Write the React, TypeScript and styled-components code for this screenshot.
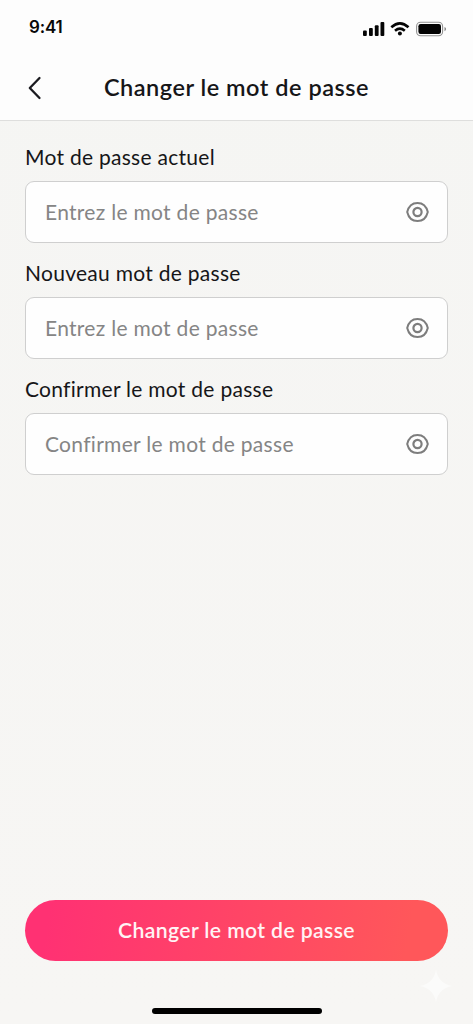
import React, { useState } from "react";
import styled, { createGlobalStyle } from "styled-components";

const GlobalStyle = createGlobalStyle`
  *, *::before, *::after { box-sizing: border-box; }
  body {
    margin: 0;
    background: #f6f6f4;
    font-family: Lato, "Liberation Sans", sans-serif;
    color: #161618;
  }
`;

const Screen = styled.div`
  position: relative;
  display: flex;
  flex-direction: column;
  width: 100%;
  height: 1024px;
  overflow: hidden;
  background: linear-gradient(#f5f5f3, #f7f6f4);
`;

const Header = styled.header`
  height: 121px;
  background: #fdfdfd;
  border-bottom: 1px solid #dededd;
`;

const StatusBar = styled.div`
  display: flex;
  justify-content: space-between;
  align-items: center;
  height: 56px;
  padding: 0 26px 0 29px;
`;

const Time = styled.span`
  font: 600 17px/20px Inter, sans-serif;
  letter-spacing: -0.2px;
  color: #080808;
  margin-top: -3px;
`;

const StatusIcons = styled.div`
  display: flex;
  align-items: center;
  margin-top: 2px;
`;

const NavBar = styled.div`
  display: grid;
  grid-template-columns: 70px 1fr 70px;
  align-items: center;
  height: 64px;
`;

const BackButton = styled.button`
  display: flex;
  padding: 0 0 0 27px;
  border: 0;
  background: none;
`;

const Title = styled.h1`
  margin: 0;
  padding-bottom: 2px;
  text-align: center;
  white-space: nowrap;
  font-size: 23.5px;
  line-height: 28px;
  font-weight: 600;
  letter-spacing: 0.52px;
`;

const Form = styled.form`
  flex: 1;
  display: flex;
  flex-direction: column;
  padding: 22px 25px 63px;
`;

const Field = styled.div`
  margin-bottom: 16px;
`;

const Label = styled.label`
  display: block;
  height: 38px;
  font-size: 21px;
  line-height: 28px;
  letter-spacing: 0.28px;
`;

const InputBox = styled.div`
  display: flex;
  align-items: center;
  height: 62px;
  padding: 0 18px 0 19px;
  border: 1px solid #cfcfcf;
  border-radius: 9px;
  background: #fefefe;
`;

const Input = styled.input`
  flex: 1;
  min-width: 0;
  padding: 0 0 1px;
  border: 0;
  outline: 0;
  background: none;
  font-family: inherit;
  font-size: 21px;
  line-height: 28px;
  letter-spacing: 0.3px;
  &::placeholder { color: #858585; opacity: 1; }
`;

const EyeButton = styled.button`
  display: flex;
  padding: 0;
  border: 0;
  background: none;
`;

const SubmitButton = styled.button`
  margin-top: auto;
  height: 61px;
  padding: 0 0 2px;
  border: 0;
  border-radius: 31px;
  background: linear-gradient(100deg, #ff3173 6%, #ff575a 90%);
  color: #fff3f5;
  font-family: inherit;
  font-size: 21.2px;
  font-weight: 600;
  letter-spacing: 0.37px;
`;

const HomeIndicator = styled.div`
  position: absolute;
  left: 152px;
  bottom: 10px;
  width: 170px;
  height: 6px;
  border-radius: 3px;
  background: #000;
`;

const Sparkle = styled.svg`
  position: absolute;
  left: 420px;
  top: 970px;
`;

const EyeIcon = () => (
  <svg width="23" height="22" viewBox="0 0 23 22" fill="none" stroke="#7d7d7d" strokeWidth="2">
    <path d="M1.2 11C2.6 5.2 6.5 1.9 11.5 1.9S20.4 5.2 21.8 11C20.4 16.8 16.5 20.1 11.5 20.1S2.6 16.8 1.2 11Z" strokeLinejoin="round" />
    <circle cx="11.5" cy="11" r="4.1" strokeWidth="2.2" />
  </svg>
);

const fields = [
  { id: "current", label: "Mot de passe actuel", placeholder: "Entrez le mot de passe" },
  { id: "next", label: "Nouveau mot de passe", placeholder: "Entrez le mot de passe" },
  { id: "confirm", label: "Confirmer le mot de passe", placeholder: "Confirmer le mot de passe" },
];

function PasswordField({ id, label, placeholder }: { id: string; label: string; placeholder: string }) {
  const [visible, setVisible] = useState(false);
  return (
    <Field>
      <Label htmlFor={id}>{label}</Label>
      <InputBox>
        <Input id={id} type={visible ? "text" : "password"} placeholder={placeholder} />
        <EyeButton type="button" onClick={() => setVisible(!visible)}>
          <EyeIcon />
        </EyeButton>
      </InputBox>
    </Field>
  );
}

export default function App() {
  return (
    <Screen>
      <GlobalStyle />
      <Header>
        <StatusBar>
          <Time>9:41</Time>
          <StatusIcons>
            <svg width="84" height="16" viewBox="0 0 84 16">
              <g fill="#050505">
                <rect x="0" y="9.5" width="3.8" height="5.5" rx="1" />
                <rect x="6" y="7" width="3.8" height="8" rx="1" />
                <rect x="11.8" y="4.3" width="3.8" height="10.7" rx="1" />
                <rect x="17.5" y="1" width="3.8" height="14" rx="1" />
                <circle cx="36.9" cy="12.6" r="2" />
              </g>
              <g fill="none" stroke="#050505" strokeWidth="2.6">
                <path d="M28.3 6.2Q36.9-1.6 45.5 6.2" />
                <path d="M32 9.8Q36.9 5.6 41.8 9.8" />
              </g>
              <rect x="53.6" y="1.3" width="26" height="13.4" rx="4" fill="none" stroke="#929292" strokeWidth="1.1" />
              <rect x="55.4" y="3" width="22.6" height="10" rx="2.2" fill="#030303" />
              <path d="M81.5 6v4.2q1.6-.6 1.6-2.1t-1.6-2.1Z" fill="#858585" />
            </svg>
          </StatusIcons>
        </StatusBar>
        <NavBar>
          <BackButton aria-label="Retour">
            <svg width="16" height="26" viewBox="0 0 16 26" fill="none" stroke="#1b1b20" strokeWidth="2.3" strokeLinecap="round" strokeLinejoin="round">
              <path d="M12.5 3 2.8 13l9.7 10" />
            </svg>
          </BackButton>
          <Title>Changer le mot de passe</Title>
        </NavBar>
      </Header>
      <Form>
        {fields.map((f) => (
          <PasswordField key={f.id} {...f} />
        ))}
        <SubmitButton type="button">Changer le mot de passe</SubmitButton>
      </Form>
      <Sparkle width="32" height="32" viewBox="0 0 32 32">
        <path d="M16 0Q18.5 13.5 32 16Q18.5 18.5 16 32Q13.5 18.5 0 16Q13.5 13.5 16 0Z" fill="#fbfbfa" />
      </Sparkle>
      <HomeIndicator />
    </Screen>
  );
}
